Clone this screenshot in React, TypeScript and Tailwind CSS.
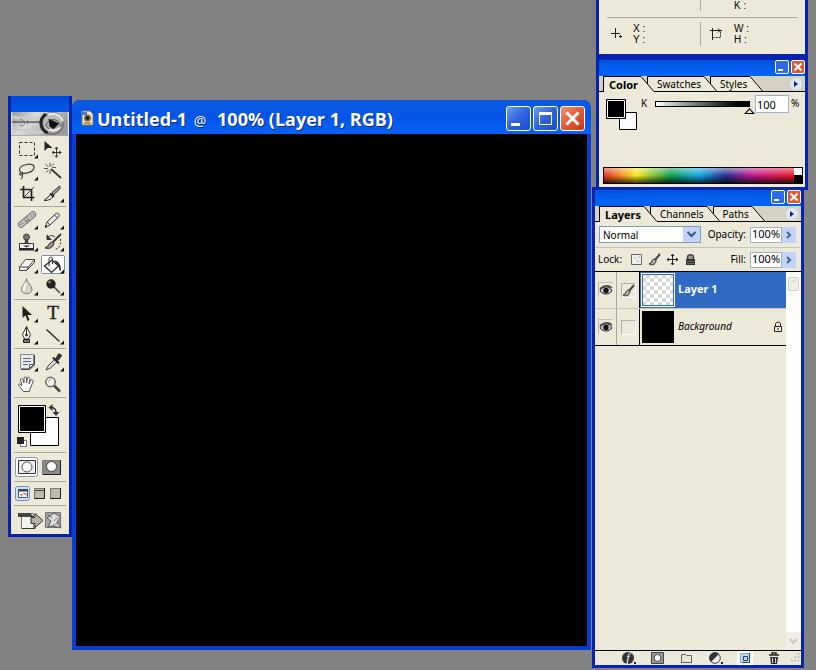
import type { ReactNode } from "react";

type Tool = { name: string; art: ReactNode; flyout?: boolean; active?: boolean };

const toolGroups: Tool[][] = [
  [
    {
      name: "Rectangular marquee",
      flyout: true,
      art: <rect x="5.500" y="4.500" width="15" height="13" strokeDasharray="3 2" />,
    },
    {
      name: "Move",
      art: (
        <>
          <path d="M4.500 3v10l3-3 5 0z" fill="#222" stroke="none" />
          <path d="M16.500 9.500v9M12.500 14.500h9M15 11l1.500-2 1.500 2M15 17.500l1.500 2 1.500-2M14 13l-2 1.500 2 1.500M19 13l2 1.500-2 1.500" />
        </>
      ),
    },
    {
      name: "Lasso",
      flyout: true,
      art: (
        <path d="M8 13C4 11 5 6 11 5c6-2 10 0 9 3-1 4-8 6-12 5-3 0-3 2-1 2s2-2 1-3c1 3 1 5-1 7" stroke="#444" strokeWidth="1.200" />
      ),
    },
    {
      name: "Magic wand",
      art: (
        <>
          <path d="M11 9l10 9" stroke="#333" strokeWidth="1.800" />
          <path d="M10 2.500v4M10 10v4M4 8.500h4M12 7.500h4M5.500 4l3 3M14 3.500l-3 3M6 12.500l2.500-2.500" stroke="#555" />
        </>
      ),
    },
    {
      name: "Crop",
      art: (
        <>
          <path d="M9.500 4v11.500h11M6 7.500h11.500V19" stroke="#222" strokeWidth="1.700" />
          <path d="M10 15l10-10" stroke="#444" />
        </>
      ),
    },
    {
      name: "Slice",
      flyout: true,
      art: (
        <>
          <path d="M12 10.500l7.500-6.500c1 1 1 2 0 3l-6 6z" fill="#999" stroke="#333" />
          <path d="M10 11.500l4 3" stroke="#222" strokeWidth="1.800" />
          <path d="M4 18.500l6.500-5.500 2.500 2c-2 2.500-5 3.500-9 3.500z" fill="#eee" stroke="#222" />
        </>
      ),
    },
  ],
  [
    {
      name: "Healing brush",
      flyout: true,
      art: (
        <>
          <path d="M7 15.500L19 5.500" stroke="#777" strokeWidth="6.500" strokeLinecap="round" />
          <path d="M7 15.500L19 5.500" stroke="#bfbdb5" strokeWidth="4.700" strokeLinecap="round" />
          <path d="M10 10l4 4.500M12.500 8l4 4.500" stroke="#777" />
          <path d="M6 15.500h1M8 14.500h1M17 7h1M19 5.500h1M12.500 11.500h2" stroke="#666" />
        </>
      ),
    },
    {
      name: "Pencil",
      flyout: true,
      art: (
        <>
          <path d="M5.500 18l1.500-5 9-8.500c2-1 4 1 3 3L10 16z" fill="#eee" stroke="#333" />
          <path d="M7.500 13l2.500 3M14.500 6l3 3" stroke="#444" />
          <path d="M5 19v-3l2 2z" fill="#111" stroke="none" />
        </>
      ),
    },
    {
      name: "Clone stamp",
      flyout: true,
      art: (
        <>
          <circle cx="12.500" cy="6" r="3" fill="#777" stroke="#444" />
          <path d="M5.500 12.500h14v5h-14z" fill="#eee" stroke="#333" />
          <path d="M11.500 9h2l.5 3.500h-3z" fill="#555" stroke="#333" />
          <path d="M9 14.500h7l-3.500 2z" fill="#333" stroke="none" />
          <path d="M5 18.500h15" strokeWidth="2" stroke="#222" />
        </>
      ),
    },
    {
      name: "History brush",
      flyout: true,
      art: (
        <>
          <path d="M21 3l-8 8" stroke="#333" strokeWidth="1.800" />
          <path d="M13 11c-3 0-4 2-5 4l-3 2c4 1 8 0 9-5z" fill="#999" stroke="#222" />
          <path d="M7 8.500V4l1.500 1.500C11 4 13 4.500 15 6" stroke="#333" />
          <path d="M7 4v5h5z" fill="#333" stroke="none" />
          <path d="M20.500 8v5l-2 4-3 1.500" stroke="#333" strokeDasharray="2 1.500" />
        </>
      ),
    },
    {
      name: "Eraser",
      flyout: true,
      art: (
        <path d="M5.500 14l6-7.500h9l-6 7.500zM5.500 14v3.500h7l2-3.500M12.500 17.500l8-8v-3" fill="#f4f2e9" stroke="#444" />
      ),
    },
    {
      name: "Paint bucket",
      flyout: true,
      active: true,
      art: (
        <>
          <path d="M4.500 13l7.500-6 6.500 6-7 6.500z" fill="#f3f3f3" stroke="#222" strokeWidth="1.200" />
          <path d="M9 13V6c0-2.500 3.500-2.500 3.500 0v5" stroke="#333" />
          <path d="M14 7.500c4 .5 7 3 7 10.500l-1.500-1-1.500-5z" fill="#222" stroke="none" />
        </>
      ),
    },
    {
      name: "Blur",
      flyout: true,
      art: (
        <>
          <path d="M12.500 3.500c0 4-5 7-5 11 0 5.500 10.500 5.500 10.500 0 0-4-5.500-7-5.500-11z" fill="#d5d3cc" stroke="#777" />
          <path d="M12 8c-2 3-3 5-2 8" stroke="#fff" strokeWidth="2" />
        </>
      ),
    },
    {
      name: "Burn",
      flyout: true,
      art: (
        <>
          <path d="M14 12l6 6" stroke="#666" strokeWidth="1.800" />
          <circle cx="11" cy="9" r="4.700" fill="#222" stroke="none" />
          <circle cx="9.500" cy="7" r="1.500" fill="#777" stroke="none" />
        </>
      ),
    },
  ],
  [
    {
      name: "Path selection",
      flyout: true,
      art: <path d="M8.500 4v12l3-2.500 2 5.500 2-1-2-5h4.500z" fill="#222" stroke="none" />,
    },
    {
      name: "Type",
      flyout: true,
      art: (
        <text x="13" y="17" textAnchor="middle" fill="#222" stroke="#222" strokeWidth=".4" fontSize="19" fontFamily="Liberation Serif, serif">
          T
        </text>
      ),
    },
    {
      name: "Pen",
      flyout: true,
      art: (
        <>
          <path d="M12.500 2.500l-4 8 2 4.500h4l2-4.500zM12.500 2.500v8" fill="#f5f3ea" stroke="#333" />
          <circle cx="12.500" cy="11" r="1" fill="#222" />
          <path d="M9.500 15.500h6v3h-6z" fill="#777" stroke="#222" />
        </>
      ),
    },
    { name: "Line", flyout: true, art: <path d="M6.500 5.500l13 12" stroke="#222" strokeWidth="1.300" /> },
  ],
  [
    {
      name: "Notes",
      flyout: true,
      art: (
        <>
          <path d="M6.500 3.500h13v10l-4 4h-9z" fill="#e8ebee" stroke="#889" />
          <path d="M20.500 4v10l-5 4.500H7" stroke="#444" />
          <path d="M9 7.500h8M9 10.500h8M9 13.500h5" stroke="#667" />
          <path d="M15.500 17.500v-4h4z" fill="#fff" stroke="#555" />
        </>
      ),
    },
    {
      name: "Eyedropper",
      flyout: true,
      art: (
        <>
          <path d="M6 19l2-4 7-7 2.500 2.500-7 6.500z" fill="#ddd" stroke="#444" />
          <path d="M13 6.500l6 6" stroke="#222" strokeWidth="2" />
          <path d="M15 8l3-5c1-1 4 0 4 2l-4 5z" fill="#333" stroke="none" />
        </>
      ),
    },
    {
      name: "Hand",
      art: (
        <path d="M9.500 18.500L4.500 12c0-2 2-1 3.500 1L6.500 7c0-2 2-2 2.500 0l1 3V5c.5-1.500 2.500-1.500 2.500 0v5l1-5c.5-1.500 2.500-1 2.500 1l-1 5 2-4c1-1 2.500 0 2 2l-3 7-.5 2.500z" fill="#fff" stroke="#555" />
      ),
    },
    {
      name: "Zoom",
      art: (
        <>
          <path d="M14 12.500l6 6" stroke="#444" strokeWidth="2.500" />
          <circle cx="10.500" cy="9" r="4.700" fill="#f2f0e8" stroke="#666" strokeWidth="1.500" />
          <path d="M8.500 9c0-2 1-2.500 2.500-2.500" stroke="#aaa" />
        </>
      ),
    },
  ],
];

function ToolButton({ tool }: { tool: Tool }) {
  return (
    <button type="button" aria-label={tool.name} className="h-[22px] w-[26px]">
      <svg viewBox="0 0 26 22" className="h-full w-full" fill="none" stroke="#333">
        {tool.active && <rect x="1.500" y="2.500" width="23" height="18" rx="1" fill="#fff" stroke="#7f8da8" />}
        {tool.art}
        {tool.flyout && <path d="M24 16.500v4h-4z" fill="#111" stroke="none" />}
      </svg>
    </button>
  );
}

function Toolbox() {
  return (
    <section className="absolute left-2 top-24 flex w-16 flex-col border-[3px] border-t-0 border-[#0624b0] bg-[#ece9d8]">
      <div className="h-4 bg-linear-to-b from-[#0048d8] to-[#0058e8]" />
      <svg viewBox="0 0 58 24" className="h-6 w-full border-b border-[#aaa]" fill="none">
        <defs>
          <linearGradient id="skin" x1="0" x2="1" y2=".4">
            <stop offset="0" stopColor="#999" />
            <stop offset=".4" stopColor="#ddd" />
            <stop offset="1" stopColor="#999" />
          </linearGradient>
        </defs>
        <path fill="url(#skin)" d="M0 0h58v24H0z" />
        <path d="M0 5c10 3 20-1 29 3M2 19c10-2 20 4 30 2" stroke="#ccc" strokeWidth="3" />
        <path d="M0 10.500h30" stroke="#555" strokeWidth="1.500" />
        <path d="M8 8c4 0 5 2 5 4s-4 4-5 1M16 8v5" stroke="#777" />
        <ellipse cx="42" cy="12" rx="11" ry="11" fill="#bbb" stroke="#777" strokeWidth="2" />
        <path d="M37 22C29 18 27 8 35 2" stroke="#222" strokeWidth="3" />
        <path d="M37 3c6-3 14 0 16 7" stroke="#eee" strokeWidth="2" />
        <path d="M35 14c3-8 11-8 16-1-4 7-12 8-16 1z" fill="#aaa" stroke="#555" />
        <path d="M38 7l11 5-6 6-4-3z" fill="#111" />
        <path d="M38 18c4 2 9 1 12-2" stroke="#eee" strokeWidth="2" />
      </svg>

      {toolGroups.map((group) => (
        <div key={group[0].name} className="mx-[3px] grid grid-cols-2 border-b border-[#aca899] py-0.5">
          {group.map((tool) => (
            <ToolButton key={tool.name} tool={tool} />
          ))}
        </div>
      ))}

      <button type="button" aria-label="Foreground and background colors" className="mx-[3px] border-b border-[#aca899]">
        <svg viewBox="0 0 52 54" className="h-[54px] w-full" fill="none">
          <path d="M16.500 19.500h28v28h-28z" fill="#fff" stroke="#000" />
          <path d="M4.500 7.500h27v27h-27z" fill="#000" stroke="#000" />
          <path d="M5.500 8.500h25v25h-25z" stroke="#fff" />
          <path d="M37 9.500c4 0 5 2 5 5" stroke="#333" strokeWidth="1.500" />
          <path d="M34.500 9.500l4-3.500v7zM42 18l-3.500-4h7z" fill="#333" />
          <path d="M6.500 42.500h6v6h-6z" fill="#fff" stroke="#777" />
          <path d="M3 39h7v7H3z" fill="#222" />
        </svg>
      </button>

      <div className="mx-[3px] flex items-center gap-0.5 border-b border-[#aca899] py-1">
        <button type="button" aria-label="Standard mode" className="h-5 w-6">
          <svg viewBox="0 0 24 20" className="h-full w-full" fill="#fff">
            <rect x="1.500" y=".5" width="22" height="19" rx="2" stroke="#8c96aa" />
            <path d="M4.500 3.500h17v13h-17z" fill="#eee" stroke="#333" />
            <circle cx="13" cy="10" r="5" stroke="#555" />
          </svg>
        </button>
        <button type="button" aria-label="Quick mask mode" className="h-5 w-6">
          <svg viewBox="0 0 24 20" className="h-full w-full">
            <path d="M2.500 3.500h18v14h-18z" fill="#888" stroke="#777" />
            <path d="M20.500 3v14.500H3" fill="none" stroke="#222" />
            <circle cx="11.500" cy="9.500" r="5" fill="#fff" stroke="#444" />
          </svg>
        </button>
      </div>

      <div className="mx-[3px] flex items-center border-b border-[#aca899] py-1">
        {["Standard screen", "Full screen with menu bar", "Full screen"].map((mode, i) => (
          <button key={mode} type="button" aria-label={mode} className="h-[15px] w-4">
            <svg viewBox="0 0 16 15" className="h-full w-full" fill="none">
              {i === 0 && <rect x="1.500" y=".5" width="14" height="14" rx="2" fill="#cfe2fa" stroke="#6690c8" />}
              {i === 0 && <path d="M4.500 3.500h9v8h-9z" fill="#fff" stroke="#456" />}
              {i === 0 && <path d="M4 4.500h10" stroke="#345" strokeWidth="2" />}
              {i === 0 && <path d="M6 8.500h2v2M9 7.500h3v2" stroke="#d05050" />}
              {i > 0 && <path d="M4.500 2.500h10v10h-10z" fill="#bbb8ae" stroke="#777" />}
              {i > 0 && <path d="M14.500 2v10.500H4" stroke="#222" />}
              {i === 1 && <path d="M5 4.500h9" stroke="#444" />}
            </svg>
          </button>
        ))}
      </div>

      <button type="button" aria-label="Jump to ImageReady" className="mx-[3px]">
        <svg viewBox="0 0 52 28" className="h-7 w-full" fill="none">
          <path d="M7.500 7.500h12v15h-12z" fill="#f4f3ee" stroke="#777" />
          <path d="M8 22.500h13v-3" stroke="#333" />
          <path d="M4 7h12l4 4H4z" fill="#444" />
          <path d="M17 11.500h4V7.500l8 7-8 7v-4h-4z" fill="#b5b3aa" stroke="#333" />
          <path d="M31.500 6.500h15v15h-15z" fill="#a9a7a0" stroke="#777" />
          <path d="M33 12l7-5 7 4-4 5 4 6-8-2-5 1 3-6z" fill="#ddd" stroke="#555" />
          <path d="M33 8l5 4M40 15l7-6M36 21l10-5" stroke="#777" />
        </svg>
      </button>
    </section>
  );
}

function CaptionButton({ kind }: { kind: "minimize" | "maximize" | "close" }) {
  return (
    <button
      type="button"
      aria-label={kind}
      className={[
        "h-[25px] w-[25px] rounded-[3px] border border-white",
        kind === "close"
          ? "bg-linear-to-br from-[#f09070] via-[#e25a34] to-[#c23a18]"
          : "bg-linear-to-br from-[#7099f0] via-[#2f62dc] to-[#1950d0]",
      ].join(" ")}
    >
      <svg viewBox="0 0 23 23" className="h-full w-full" fill="none" stroke="#fff">
        {kind === "minimize" && <path d="M4 17.500h9" strokeWidth="3" />}
        {kind === "maximize" && <path d="M5.500 7v10.500h12V7" />}
        {kind === "maximize" && <path d="M5 6.500h13" strokeWidth="3" />}
        {kind === "close" && <path d="M5.500 5.500l12 12M17.500 5.500l-12 12" strokeWidth="3" />}
      </svg>
    </button>
  );
}

function DocumentWindow() {
  return (
    <main className="absolute bottom-5 left-[72px] right-[225px] top-[100px] flex flex-col rounded-t-lg border-4 border-t-0 border-[#0a3cd0] bg-black">
      <header className="-mx-1 flex h-[34px] shrink-0 items-center gap-[3px] rounded-t-lg bg-linear-to-b from-[#0b5ae0] via-[#0555e8] to-[#0562fa] pl-2 pr-1.5 pt-0.5">
        <svg viewBox="0 0 14 16" className="h-4 w-3.5">
          <path d="M2 1h8l3 3v11H2z" fill="#eee6c8" stroke="#777" />
          <path d="M1 2h6v3H1z" fill="#4a80c0" />
          <circle cx="7.500" cy="8" r="3.500" fill="#7a6550" />
          <circle cx="7.500" cy="8" r="1.700" fill="#111" />
          <path d="M4 12h7v2H4z" fill="#b9a040" />
        </svg>
        <h1 className="flex-1 truncate pt-0.5 font-['Open_Sans',sans-serif] text-[18px] font-bold leading-6 text-white [text-shadow:1px_1px_#0a2a80]">
          Untitled-1 <span className="ml-0.5 mr-1.5 text-sm font-normal">@</span> 100% (Layer 1, RGB)
        </h1>
        <div className="flex gap-0.5">
          <CaptionButton kind="minimize" />
          <CaptionButton kind="maximize" />
          <CaptionButton kind="close" />
        </div>
      </header>
      <div className="flex-1 bg-black" />
    </main>
  );
}

function PaletteTitle() {
  return (
    <div className="flex h-4 shrink-0 items-start justify-end gap-0.5 bg-linear-to-b from-[#0054e0] to-[#0066fb]">
      <button type="button" aria-label="Minimize palette" className="h-[14px] w-[14px] rounded-xs border border-white bg-[#2f6ae4]">
        <svg viewBox="0 0 12 12" className="h-full w-full">
          <path d="M2 8h5v2H2z" fill="#fff" />
        </svg>
      </button>
      <button type="button" aria-label="Close palette" className="h-[14px] w-[14px] rounded-xs border border-white bg-[#e0562f]">
        <svg viewBox="0 0 12 12" className="h-full w-full">
          <path d="M2.500 2.500l7 7M9.500 2.500l-7 7" stroke="#fff" strokeWidth="2" />
        </svg>
      </button>
    </div>
  );
}

function TabEdge({ first, last }: { first: boolean; last: boolean }) {
  return (
    <svg viewBox="0 0 13 16" className="h-4 w-[13px] shrink-0" fill="none" stroke="#000">
      <path d="M0 0l13 15.500V16H0z" fill="#ece9d8" stroke="none" />
      {!last && <path d="M6 0h7v16L6 7z" fill="#ece9d8" stroke="none" />}
      {!last && <path d="M13 .5H6.500V8" />}
      <path d="M0 .5l13 15" />
      {!first && <path d="M0 15.500h13" />}
    </svg>
  );
}

function PaletteTabs({ tabs }: { tabs: string[] }) {
  return (
    <div className="flex h-4 shrink-0 bg-[#d6d2c2]">
      <div className="w-1 border-b border-black" />
      {tabs.map((tab, i) => (
        <div key={tab} className="flex">
          <button
            type="button"
            className={[
              "h-4 border-t border-black bg-[#ece9d8] leading-[14px]",
              i === 0 ? "border-l pl-[5px] pr-[3px] text-[11px] font-bold" : "border-b px-[3px]",
            ].join(" ")}
          >
            {tab}
          </button>
          <TabEdge first={i === 0} last={i === tabs.length - 1} />
        </div>
      ))}
      <div className="flex flex-1 items-center justify-end border-b border-black pr-[3px]">
        <button type="button" aria-label="Palette menu" className="h-3 w-3 rounded-full bg-[#dfe8fb]">
          <svg viewBox="0 0 12 12">
            <path d="M4 3l4 3-4 3z" fill="#0a2a80" />
          </svg>
        </button>
      </div>
    </div>
  );
}

const paletteFrame = "absolute flex w-[212px] flex-col border-[3px] border-[#0624b0] bg-[#ece9d8]";

function InfoPalette() {
  return (
    <section className={`${paletteFrame} right-2 top-0 border-t-0 font-['Liberation_Sans',sans-serif]`}>
      <div className="mx-2 flex h-[18px] border-b border-[#aca899] leading-3">
        <div className="mb-1.5 w-[94px] border-r border-[#aca899]" />
        <span className="pl-[33px]">K :</span>
      </div>
      <div className="mx-2 mb-2 mt-1 flex h-6">
        <div className="flex w-[94px] items-center border-r border-[#aca899]">
          <svg viewBox="0 0 14 14" className="mx-1 h-3.5 w-3.5" stroke="#222">
            <path d="M4.500 1v10M0 6.500h9M8 9.500h3M9.500 8v3" />
          </svg>
          <div className="pl-1 leading-[11px]">
            <p>X :</p>
            <p>Y :</p>
          </div>
        </div>
        <div className="flex items-center">
          <svg viewBox="0 0 14 14" className="mx-2 h-3.5 w-3.5" stroke="#222" fill="none">
            <path d="M3.500 3.500h8v7h-8z" strokeDasharray="2 1" />
            <path d="M1 3.500h12M3.500 1v12M9 1.500l2 2-2 2" />
          </svg>
          <div className="pl-[3px] leading-[11px]">
            <p>W :</p>
            <p>H :</p>
          </div>
        </div>
      </div>
    </section>
  );
}

function ColorPalette() {
  return (
    <section className={`${paletteFrame} right-2 top-[57px]`}>
      <PaletteTitle />
      <PaletteTabs tabs={["Color", "Swatches", "Styles"]} />
      <div className="flex h-[75px] items-start pl-[7px] pt-[3px]">
        <svg viewBox="0 0 32 33" className="mt-1 h-[33px] w-8" role="img" aria-label="Current colors">
          <path d="M13.500 13.500h17v17h-17z" fill="#fff" stroke="#000" />
          <path d="M.5.5h19v19H.5z" stroke="#000" />
          <path d="M1.500 1.500h17v17h-17z" stroke="#fff" />
        </svg>
        <label htmlFor="black" className="w-3 pl-[3px] leading-4">
          K
        </label>
        <div className="mt-[6px] flex-1">
          <div className="mx-[5px] h-1.5 border border-black bg-linear-to-r from-white to-black" />
          <input
            id="black"
            type="range"
            defaultValue={100}
            className="block h-2 w-full appearance-none bg-transparent [&::-webkit-slider-thumb]:h-1.5 [&::-webkit-slider-thumb]:w-[11px] [&::-webkit-slider-thumb]:appearance-none [&::-webkit-slider-thumb]:bg-black [&::-webkit-slider-thumb]:[clip-path:polygon(50%_0,100%_100%,0_100%,50%_0,50%_25%,22%_82%,78%_82%,50%_25%)]"
          />
        </div>
        <input aria-label="Black percent" defaultValue="100" className="h-[18px] w-[34px] border border-[#9fb2cc] bg-white pl-px text-[11px]" />
        <span className="w-4 pl-0.5 leading-4">%</span>
      </div>
      <div className="mb-[3px] ml-1 mr-0.5 flex h-[17px] border border-black">
        <div className="flex-1 bg-[linear-gradient(to_bottom,rgba(255,255,255,.5),transparent_50%,rgba(0,0,0,.75)),linear-gradient(to_right,#e8302a,#f7e81c_17%,#10a050_35%,#10a8e8_50%,#2a3090_64%,#c01890_78%,#e81c28)]" />
        <div className="flex w-2 flex-col bg-black">
          <div className="h-[7px] bg-white" />
        </div>
      </div>
    </section>
  );
}

function Brush() {
  return (
    <svg viewBox="0 0 13 13" className="h-[13px] w-[13px]" fill="none">
      <path d="M12 1L7 7" stroke="#444" strokeWidth="2" />
      <path d="M7 6c-3 0-3 2-4 4l-2 1c4 2 7 0 7-4z" fill="#aaa" stroke="#333" />
    </svg>
  );
}

function Percent({ id, label }: { id: string; label: string }) {
  return (
    <div className="ml-auto flex items-center">
      <label htmlFor={id} className="pr-1">
        {label}
      </label>
      <input id={id} defaultValue="100%" className="h-4 w-8 border border-[#9fb2cc] bg-white pl-px text-[11px]" />
      <button type="button" aria-label={`${label} slider`} className="h-4 w-3.5 bg-[#c2d3fb]">
        <svg viewBox="0 0 14 16" fill="none">
          <path d="M5 5l3 3-3 3" stroke="#4d6185" strokeWidth="2" />
        </svg>
      </button>
    </div>
  );
}

const layers = [
  { name: "Layer 1", selected: true },
  { name: "Background", selected: false },
];

function LayerRow({ name, selected }: { name: string; selected: boolean }) {
  return (
    <li className="flex h-[37px] border-b border-[#c8c4b4] last:border-black">
      <button type="button" aria-label={`Toggle ${name}`} className="flex w-[22px] items-center justify-center border-r border-[#aca899]">
        <svg viewBox="0 0 16 16" className="h-4 w-4" fill="none">
          <path d="M.5 15V.5H15" stroke="#c4c0b0" />
          <path d="M2 9c2-5 9-6 12 0-3 4-9 4-12 0z" fill="#ccc" stroke="#222" />
          <circle cx="8" cy="8.500" r="2.700" fill="#111" />
          <path d="M2 7c3-4 9-4 12-1" stroke="#444" strokeWidth="1.500" />
        </svg>
      </button>
      <div className="flex w-[23px] items-center justify-center border-r border-black">
        <div className="h-[15px] w-[15px] border border-[#b5b1a2] border-b-white border-r-white">{selected && <Brush />}</div>
      </div>
      <div className={["flex flex-1 items-center", selected ? "bg-[#316ac5] text-white" : ""].join(" ")}>
        <div
          className={[
            "ml-px h-[34px] w-[34px] border",
            selected
              ? "border-white bg-[repeating-conic-gradient(#d9d9d9_0_25%,#fff_0_50%)] bg-size-[8px_8px] outline outline-[#316ac5] -outline-offset-2"
              : "border-[#ece9d8] bg-black",
          ].join(" ")}
        />
        <span className={["flex-1 pb-0.5 pl-[3px]", selected ? "text-[11px] font-bold" : "italic"].join(" ")}>{name}</span>
        {!selected && (
          <svg viewBox="0 0 10 12" className="mr-[3px] h-3 w-2.5" fill="none" stroke="#222">
            <path d="M1.500 5.500h7v5h-7zM2.500 5V3c0-2.500 5-2.500 5 0v2M5 7v2" />
          </svg>
        )}
      </div>
    </li>
  );
}

const layerActions: { name: string; art: ReactNode }[] = [
  {
    name: "Layer style",
    art: (
      <>
        <circle cx="7" cy="7" r="6" fill="#333" />
        <text x="7" y="11" textAnchor="middle" fill="#fff" fontSize="12" fontStyle="italic" fontFamily="Liberation Serif, serif">
          f
        </text>
        <path d="M13 11h2v2h-2z" fill="#222" />
      </>
    ),
  },
  {
    name: "Layer mask",
    art: (
      <>
        <path d="M1.500 1.500h12v11h-12z" fill="#999" stroke="#444" />
        <circle cx="7.500" cy="7" r="3.500" fill="#fff" stroke="#444" />
      </>
    ),
  },
  {
    name: "New set",
    art: <path d="M2.500 11.500v-8h4l1 1h5v7zM12.500 5v6.500H2" fill="#e8e5d8" stroke="#666" />,
  },
  {
    name: "Adjustment layer",
    art: (
      <>
        <circle cx="7" cy="7" r="5.300" fill="#eee" stroke="#444" />
        <path d="M3 11A5.500 5.500 0 0 1 11 3z" fill="#333" />
        <path d="M13 11h2v2h-2z" fill="#222" />
      </>
    ),
  },
  {
    name: "New layer",
    art: (
      <>
        <path d="M0 0h16v14H0z" fill="#fff" />
        <path d="M3.500 2.500h9v9h-9z" fill="#bcd8e8" stroke="#8fb0c4" />
        <path d="M12.500 2v9.500H5M6.500 5.500h4v4h-4z" fill="none" stroke="#174a70" />
      </>
    ),
  },
  {
    name: "Delete layer",
    art: (
      <>
        <path d="M3 4h10M6 3.500V2h4v1.500" fill="none" stroke="#222" strokeWidth="1.500" />
        <path d="M4 6h8l-1 7H5z" fill="#333" />
        <path d="M6.500 7v5M9.500 7v5" stroke="#ccc" />
      </>
    ),
  },
];

function LayersPalette() {
  return (
    <section className={`${paletteFrame} bottom-0.5 right-3 top-[187px]`}>
      <PaletteTitle />
      <PaletteTabs tabs={["Layers", "Channels", "Paths"]} />
      <div className="flex h-[26px] items-center border-b border-[#c8c4b4] pl-1 pr-[5px]">
        <div className="relative">
          <select aria-label="Blend mode" className="h-[17px] w-[102px] appearance-none border border-[#7f9db9] bg-white pl-[3px] leading-[14px]">
            <option>Normal</option>
          </select>
          <svg viewBox="0 0 17 15" className="pointer-events-none absolute right-px top-px h-[15px] w-[17px] bg-[#c2d3fb]" fill="none">
            <path d="M4.500 5l4 4 4-4" stroke="#3a558c" strokeWidth="2" />
          </svg>
        </div>
        <Percent id="opacity" label="Opacity:" />
      </div>
      <div className="flex h-6 items-center border-b border-black pl-[3px] pr-[5px]">
        <span>Lock:</span>
        <div className="flex items-center gap-[5px] pl-2">
          <button type="button" aria-label="Lock transparent pixels">
            <svg viewBox="0 0 13 13" className="h-[13px] w-[13px]">
              <path d="M1.500 1.500h10v10h-10z" fill="#eee" stroke="#666" />
              <path d="M4 4h2v2H4zM7 7h2v2H7zM8 3h2v2H8z" fill="#d0cdc3" />
            </svg>
          </button>
          <button type="button" aria-label="Lock image pixels">
            <Brush />
          </button>
          <button type="button" aria-label="Lock position">
            <svg viewBox="0 0 13 13" className="h-[13px] w-[13px]" fill="none" stroke="#222">
              <path d="M6.500 1v11M1 6.500h11M5 3l1.500-2L8 3M5 10l1.500 2L8 10M3 5L1 6.500 3 8M10 5l2 1.500L10 8" />
            </svg>
          </button>
          <button type="button" aria-label="Lock all">
            <svg viewBox="0 0 13 13" className="h-[13px] w-[13px]">
              <path d="M3.500 6.500V4c0-3 6-3 6 0v2.500" fill="#999" stroke="#444" strokeWidth="1.500" />
              <path d="M2 6h9v6H2z" fill="#333" />
              <path d="M3 8.500h7M3 10.500h7" stroke="#666" />
            </svg>
          </button>
        </div>
        <Percent id="fill" label="Fill:" />
      </div>

      <div className="flex min-h-0 flex-1">
        <ul className="flex-1">
          {layers.map((layer) => (
            <LayerRow key={layer.name} {...layer} />
          ))}
        </ul>
        <div className="flex w-[15px] flex-col justify-between bg-[#fdfdfa]">
          <svg viewBox="0 0 15 20" fill="none" stroke="#d0cec3">
            <rect x="2.500" y="5.500" width="10" height="13" rx="1" fill="#f1efe5" />
            <path d="M5 11l2.500-3 2.500 3" />
          </svg>
          <svg viewBox="0 0 15 18" fill="none" stroke="#c9c7bb">
            <path d="M0 0h15v18H0z" fill="#f1efe5" stroke="none" />
            <path d="M4 7l3.500 4L11 7" strokeWidth="2" />
          </svg>
        </div>
      </div>

      <footer className="flex h-[15px] shrink-0 items-center gap-[13px] border-t border-black pl-[26px]">
        {layerActions.map(({ name, art }) => (
          <button key={name} type="button" aria-label={name}>
            <svg viewBox="0 0 16 14" className="h-3.5 w-4">
              {art}
            </svg>
          </button>
        ))}
        <svg viewBox="0 0 12 12" className="-ml-1 h-3 w-3" fill="#b5b1a2">
          <path d="M8 0h2v2H8zM4 4h2v2H4zM8 4h2v2H8zM0 8h2v2H0zM4 8h2v2H4zM8 8h2v2H8z" />
        </svg>
      </footer>
    </section>
  );
}

export default function App() {
  return (
    <div className="relative min-h-screen overflow-hidden bg-[#828282] font-['Noto_Sans',sans-serif] text-[10px] text-black">
      <DocumentWindow />
      <Toolbox />
      <InfoPalette />
      <ColorPalette />
      <LayersPalette />
    </div>
  );
}
